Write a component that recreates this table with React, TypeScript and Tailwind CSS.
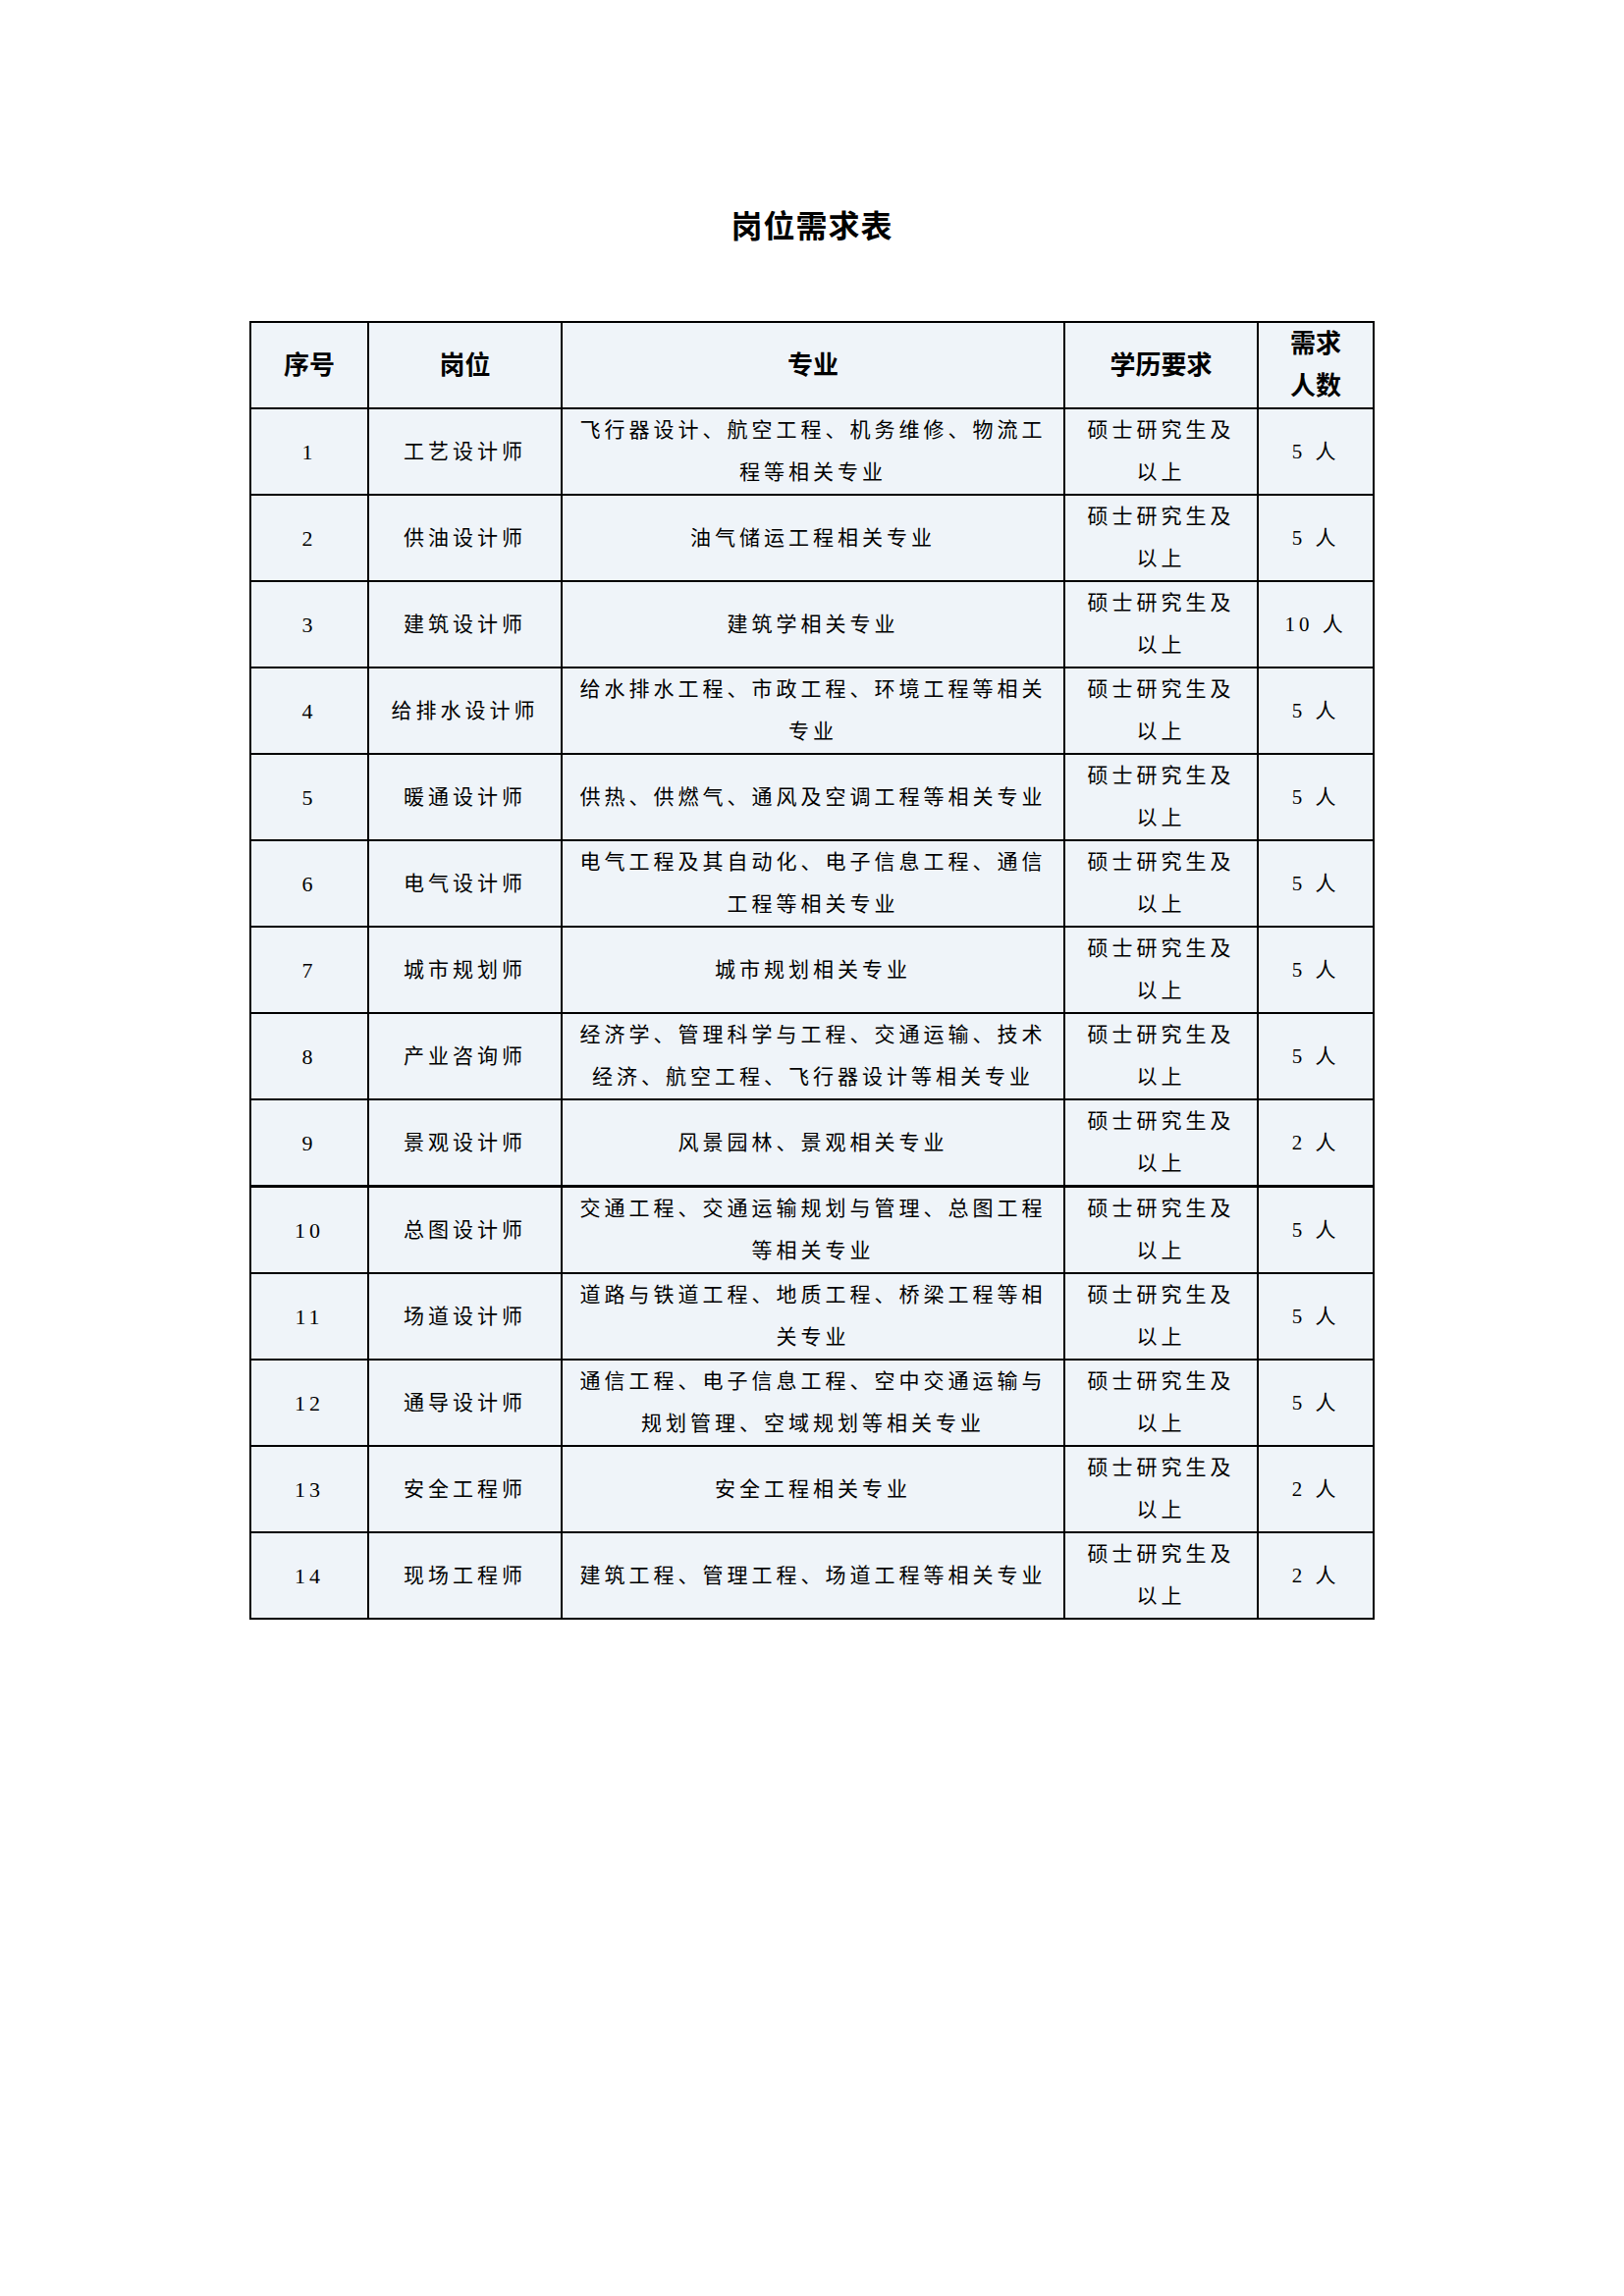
import React from "react";

type Row = { no: string; pos: string; major: string[]; count: string };

const rows: Row[] = [
  { no: "1", pos: "工艺设计师", major: ["飞行器设计、航空工程、机务维修、物流工", "程等相关专业"], count: "5 人" },
  { no: "2", pos: "供油设计师", major: ["油气储运工程相关专业"], count: "5 人" },
  { no: "3", pos: "建筑设计师", major: ["建筑学相关专业"], count: "10 人" },
  { no: "4", pos: "给排水设计师", major: ["给水排水工程、市政工程、环境工程等相关", "专业"], count: "5 人" },
  { no: "5", pos: "暖通设计师", major: ["供热、供燃气、通风及空调工程等相关专业"], count: "5 人" },
  { no: "6", pos: "电气设计师", major: ["电气工程及其自动化、电子信息工程、通信", "工程等相关专业"], count: "5 人" },
  { no: "7", pos: "城市规划师", major: ["城市规划相关专业"], count: "5 人" },
  { no: "8", pos: "产业咨询师", major: ["经济学、管理科学与工程、交通运输、技术", "经济、航空工程、飞行器设计等相关专业"], count: "5 人" },
  { no: "9", pos: "景观设计师", major: ["风景园林、景观相关专业"], count: "2 人" },
  { no: "10", pos: "总图设计师", major: ["交通工程、交通运输规划与管理、总图工程", "等相关专业"], count: "5 人" },
  { no: "11", pos: "场道设计师", major: ["道路与铁道工程、地质工程、桥梁工程等相", "关专业"], count: "5 人" },
  { no: "12", pos: "通导设计师", major: ["通信工程、电子信息工程、空中交通运输与", "规划管理、空域规划等相关专业"], count: "5 人" },
  { no: "13", pos: "安全工程师", major: ["安全工程相关专业"], count: "2 人" },
  { no: "14", pos: "现场工程师", major: ["建筑工程、管理工程、场道工程等相关专业"], count: "2 人" },
];

const font = { fontFamily: '"Liberation Serif", "Noto Sans CJK SC", serif' };

function Lines({ lines }: { lines: string[] }) {
  return (
    <div className="leading-[43px]">
      {lines.map((l, i) => (
        <div key={i} className="whitespace-nowrap">
          {l}
        </div>
      ))}
    </div>
  );
}

export default function App() {
  return (
    <div className="min-h-[2339px] w-full bg-white text-black" style={font}>
      <div className="pt-[211px]">
        <h1 className="text-center text-[32px] font-bold leading-[40px] tracking-[1px]">岗位需求表</h1>
      </div>
      <div className="mt-[76px] flex justify-center">
        <table className="w-[1144px] table-fixed border-collapse border-2 border-black bg-[#eff4f9]">
          <colgroup>
            <col className="w-[120px]" />
            <col className="w-[197px]" />
            <col className="w-[512px]" />
            <col className="w-[197px]" />
            <col className="w-[118px]" />
          </colgroup>
          <thead>
            <tr className="h-[87px]">
              <th className="border-2 border-black p-0 text-center align-middle text-[26px] font-bold leading-[43px]">序号</th>
              <th className="border-2 border-black p-0 text-center align-middle text-[26px] font-bold leading-[43px]">岗位</th>
              <th className="border-2 border-black p-0 text-center align-middle text-[26px] font-bold leading-[43px]">专业</th>
              <th className="border-2 border-black p-0 text-center align-middle text-[26px] font-bold leading-[43px]">学历要求</th>
              <th className="border-2 border-black p-0 text-center align-middle text-[26px] font-bold leading-[43px]">
                <div>需求</div>
                <div>人数</div>
              </th>
            </tr>
          </thead>
          <tbody className="text-[21px] leading-[43px] tracking-[4px]">
            {rows.map((r) => {
              const b = r.no === "9" ? "border-b-[3px]" : "";
              return (
                <tr key={r.no} className="h-[86px]">
                  <td className={`border-2 border-black p-0 text-center align-middle text-[22px] ${b}`}>{r.no}</td>
                  <td className={`border-2 border-black p-0 text-center align-middle ${b}`}>{r.pos}</td>
                  <td className={`border-2 border-black p-0 text-center align-middle ${b}`}>
                    <Lines lines={r.major} />
                  </td>
                  <td className={`border-2 border-black p-0 text-center align-middle ${b}`}>
                    <Lines lines={["硕士研究生及", "以上"]} />
                  </td>
                  <td className={`border-2 border-black p-0 text-center align-middle ${b}`}>{r.count}</td>
                </tr>
              );
            })}
          </tbody>
        </table>
      </div>
    </div>
  );
}
